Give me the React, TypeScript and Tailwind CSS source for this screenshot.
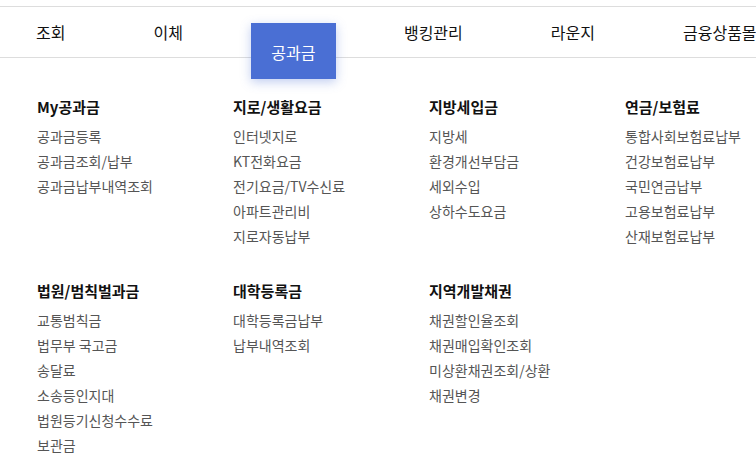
import React from "react";

const navItems = ["조회", "이체", "공과금", "뱅킹관리", "라운지", "금융상품몰"];

type Group = { title: string; items: string[] };

const row1: Group[] = [
  { title: "My공과금", items: ["공과금등록", "공과금조회/납부", "공과금납부내역조회"] },
  { title: "지로/생활요금", items: ["인터넷지로", "KT전화요금", "전기요금/TV수신료", "아파트관리비", "지로자동납부"] },
  { title: "지방세입금", items: ["지방세", "환경개선부담금", "세외수입", "상하수도요금"] },
  { title: "연금/보험료", items: ["통합사회보험료납부", "건강보험료납부", "국민연금납부", "고용보험료납부", "산재보험료납부"] },
];

const row2: Group[] = [
  { title: "법원/범칙벌과금", items: ["교통범칙금", "법무부 국고금", "송달료", "소송등인지대", "법원등기신청수수료", "보관금"] },
  { title: "대학등록금", items: ["대학등록금납부", "납부내역조회"] },
  { title: "지역개발채권", items: ["채권할인율조회", "채권매입확인조회", "미상환채권조회/상환", "채권변경"] },
];

function Column({ g }: { g: Group }) {
  return (
    <div className="flex flex-col">
      <div className="text-[15px] leading-[20px] font-bold text-[#111]">{g.title}</div>
      <ul className="mt-[7px] flex flex-col">
        {g.items.map((it) => (
          <li key={it} className="text-[14px] leading-[25px] text-[#555] whitespace-nowrap">
            {it}
          </li>
        ))}
      </ul>
    </div>
  );
}

export default function App() {
  return (
    <div
      className="w-[756px] h-[465px] bg-white overflow-hidden"
      style={{ fontFamily: '"Noto Sans CJK KR", "Noto Sans", sans-serif' }}
    >
      <div className="h-[6px]" />
      <nav className="h-[52px] border-t border-b border-[#dddddd] flex items-stretch pl-[16px] gap-[48px] whitespace-nowrap">
        {navItems.map((n) =>
          n === "공과금" ? (
            <div key={n} className="relative w-[85px] shrink-0">
              <div className="absolute left-0 w-[85px] top-[16px] h-[56px] bg-[#4a6fd4] shadow-[0_3px_10px_rgba(74,111,212,0.35)] flex items-center justify-center pt-[2px] text-white text-[16px] z-10">
                {n}
              </div>
            </div>
          ) : (
            <div key={n} className="px-[20px] flex items-center text-[16px] text-[#111]">
              {n}
            </div>
          )
        )}
      </nav>
      <div className="pt-[39px] pl-[37px] flex flex-col gap-[32px]">
        <div className="grid grid-cols-[196px_196px_196px_196px]">
          {row1.map((g) => (
            <Column key={g.title} g={g} />
          ))}
        </div>
        <div className="grid grid-cols-[196px_196px_196px_196px]">
          {row2.map((g) => (
            <Column key={g.title} g={g} />
          ))}
        </div>
      </div>
    </div>
  );
}
